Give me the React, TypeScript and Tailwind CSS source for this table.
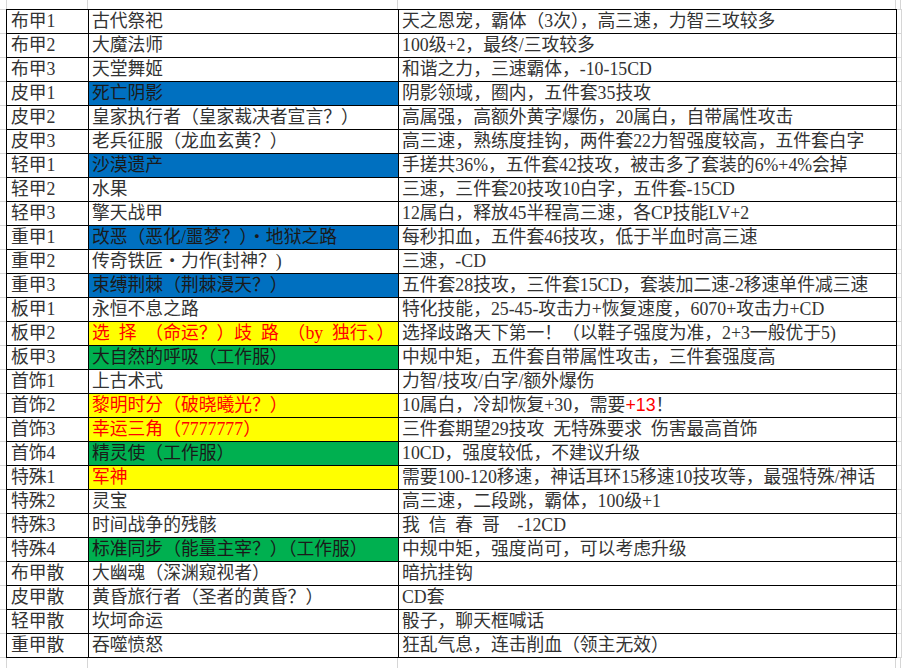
import React from "react";

type Fill = "blue" | "yellow" | "green" | undefined;

interface Row {
  slot: string;
  name: string;
  note: React.ReactNode;
  fill?: Fill;
}

const S = "\u2002";

const rows: Row[] = [
  { slot: "布甲1", name: "古代祭祀", note: "天之恩宠，霸体（3次），高三速，力智三攻较多" },
  { slot: "布甲2", name: "大魔法师", note: "100级+2，最终/三攻较多" },
  { slot: "布甲3", name: "天堂舞姬", note: "和谐之力，三速霸体，-10-15CD" },
  { slot: "皮甲1", name: "死亡阴影", note: "阴影领域，圈内，五件套35技攻", fill: "blue" },
  { slot: "皮甲2", name: "皇家执行者（皇家裁决者宣言？）", note: "高属强，高额外黄字爆伤，20属白，自带属性攻击" },
  { slot: "皮甲3", name: "老兵征服（龙血玄黄？）", note: "高三速，熟练度挂钩，两件套22力智强度较高，五件套白字" },
  { slot: "轻甲1", name: "沙漠遗产", note: "手搓共36%，五件套42技攻，被击多了套装的6%+4%会掉", fill: "blue" },
  { slot: "轻甲2", name: "水果", note: "三速，三件套20技攻10白字，五件套-15CD" },
  { slot: "轻甲3", name: "擎天战甲", note: "12属白，释放45半程高三速，各CP技能LV+2" },
  { slot: "重甲1", name: "改恶（恶化/噩梦？）・地狱之路", note: "每秒扣血，五件套46技攻，低于半血时高三速", fill: "blue" },
  { slot: "重甲2", name: "传奇铁匠・力作(封神？)", note: "三速，-CD" },
  { slot: "重甲3", name: "束缚荆棘（荆棘漫天？）", note: "五件套28技攻，三件套15CD，套装加二速-2移速单件减三速", fill: "blue" },
  { slot: "板甲1", name: "永恒不息之路", note: "特化技能，25-45-攻击力+恢复速度，6070+攻击力+CD" },
  {
    slot: "板甲2",
    name: `选${S}择${S}（命运？）歧${S}路${S}（by${S}独行、）`,
    note: "选择歧路天下第一！（以鞋子强度为准，2+3一般优于5)",
    fill: "yellow",
  },
  { slot: "板甲3", name: "大自然的呼吸（工作服）", note: "中规中矩，五件套自带属性攻击，三件套强度高", fill: "green" },
  { slot: "首饰1", name: "上古术式", note: "力智/技攻/白字/额外爆伤" },
  {
    slot: "首饰2",
    name: "黎明时分（破晓曦光？）",
    note: (
      <>
        10属白，冷却恢复+30，需要
        <span className="text-[#ff0000] font-['Liberation_Sans','Noto_Sans_CJK_SC',sans-serif]">+13</span>！
      </>
    ),
    fill: "yellow",
  },
  { slot: "首饰3", name: "幸运三角（7777777）", note: `三件套期望29技攻${S}无特殊要求${S}伤害最高首饰`, fill: "yellow" },
  { slot: "首饰4", name: "精灵使（工作服）", note: "10CD，强度较低，不建议升级", fill: "green" },
  { slot: "特殊1", name: "军神", note: "需要100-120移速，神话耳环15移速10技攻等，最强特殊/神话", fill: "yellow" },
  { slot: "特殊2", name: "灵宝", note: "高三速，二段跳，霸体，100级+1" },
  { slot: "特殊3", name: "时间战争的残骸", note: `我${S}信${S}春${S}哥${S}${S}-12CD` },
  { slot: "特殊4", name: "标准同步（能量主宰？）（工作服）", note: "中规中矩，强度尚可，可以考虑升级", fill: "green" },
  { slot: "布甲散", name: "大幽魂（深渊窥视者）", note: "暗抗挂钩" },
  { slot: "皮甲散", name: "黄昏旅行者（圣者的黄昏？）", note: "CD套" },
  { slot: "轻甲散", name: "坎坷命运", note: "骰子，聊天框喊话" },
  { slot: "重甲散", name: "吞噬愤怒", note: "狂乱气息，连击削血（领主无效）" },
];

function nameCellClass(fill: Fill) {
  if (fill === "blue") return "bg-[#0070c0] text-[#1a1a1a]";
  if (fill === "yellow") return "bg-[#ffff00] text-[#ff0000]";
  if (fill === "green") return "bg-[#00b050] text-[#1a1a1a]";
  return "bg-white";
}

const cell =
  "h-full flex items-center overflow-hidden whitespace-nowrap border-r border-black pl-[3px] pt-px leading-none";

export default function App() {
  return (
    <div className="w-[906px] h-[668px] overflow-hidden bg-white text-[#333333] text-[17.8px] font-['Liberation_Serif','Noto_Sans_CJK_SC',serif]">
      {/* top strip of gridlines */}
      <div className="flex h-[9px]">
        <div className="w-[7px] border-r border-[#d6d6d6] -mr-px" />
        <div className="w-[82px] border-r border-[#d6d6d6]" />
        <div className="w-[310px] border-r border-[#d6d6d6]" />
        <div className="w-[498px] border-r border-[#d6d6d6]" />
        <div className="w-[5px] border-r border-[#d6d6d6]" />
      </div>

      <div className="flex">
        {/* left margin */}
        <div className="w-[6px] flex flex-col border-t border-[#d6d6d6]">
          {rows.map((r) => (
            <div key={r.slot} className="h-[24px] border-b border-[#d6d6d6]" />
          ))}
        </div>

        {/* table */}
        <div className="flex flex-col border-l border-t border-black">
          {rows.map((r) => (
            <div key={r.slot} className="flex h-[24px] border-b border-black">
              <div className={`${cell} w-[82px] pl-[4px]`}>{r.slot}</div>
              <div className={`${cell} w-[310px] ${nameCellClass(r.fill)}`}>{r.name}</div>
              <div className={`${cell} w-[498px]`}>{r.note}</div>
            </div>
          ))}
        </div>

        {/* right margin */}
        <div className="w-[5px] flex flex-col border-t border-[#d6d6d6] border-r">
          {rows.map((r) => (
            <div key={r.slot} className="h-[24px] border-b border-[#d6d6d6]" />
          ))}
        </div>
      </div>

      {/* bottom strip */}
      <div className="flex h-[12px]">
        <div className="w-[7px] border-r border-[#d6d6d6] -mr-px" />
        <div className="w-[82px] border-r border-[#d6d6d6]" />
        <div className="w-[310px] border-r border-[#d6d6d6]" />
        <div className="w-[498px] border-r border-[#d6d6d6]" />
        <div className="w-[5px] border-r border-[#d6d6d6]" />
      </div>
    </div>
  );
}
